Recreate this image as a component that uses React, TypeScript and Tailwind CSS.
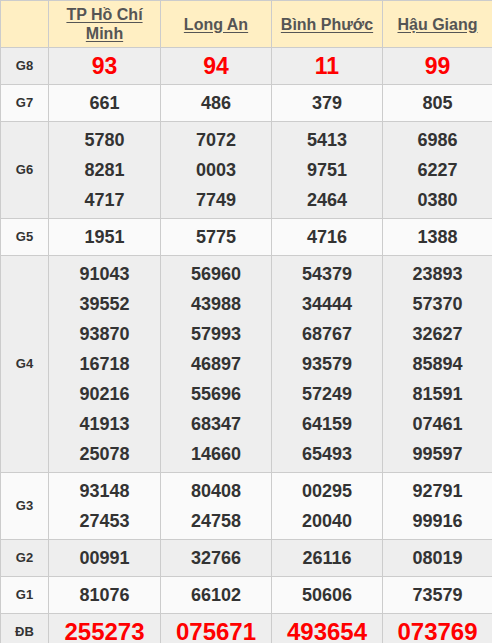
const provinces = ['TP Hồ Chí Minh', 'Long An', 'Bình Phước', 'Hậu Giang'];

type Row = { label: string; values: string[][]; kind?: 'g8' | 'db' };

const rows: Row[] = [
  { label: 'G8', kind: 'g8', values: [['93'], ['94'], ['11'], ['99']] },
  { label: 'G7', values: [['661'], ['486'], ['379'], ['805']] },
  {
    label: 'G6',
    values: [
      ['5780', '8281', '4717'],
      ['7072', '0003', '7749'],
      ['5413', '9751', '2464'],
      ['6986', '6227', '0380'],
    ],
  },
  { label: 'G5', values: [['1951'], ['5775'], ['4716'], ['1388']] },
  {
    label: 'G4',
    values: [
      ['91043', '39552', '93870', '16718', '90216', '41913', '25078'],
      ['56960', '43988', '57993', '46897', '55696', '68347', '14660'],
      ['54379', '34444', '68767', '93579', '57249', '64159', '65493'],
      ['23893', '57370', '32627', '85894', '81591', '07461', '99597'],
    ],
  },
  {
    label: 'G3',
    values: [
      ['93148', '27453'],
      ['80408', '24758'],
      ['00295', '20040'],
      ['92791', '99916'],
    ],
  },
  { label: 'G2', values: [['00991'], ['32766'], ['26116'], ['08019']] },
  { label: 'G1', values: [['81076'], ['66102'], ['50606'], ['73579']] },
  { label: 'ĐB', kind: 'db', values: [['255273'], ['075671'], ['493654'], ['073769']] },
];

export default function App() {
  return (
    <div className="w-[492px] h-[643px] overflow-hidden bg-white font-[family-name:'Liberation_Sans',Arial,sans-serif]">
      <table className="w-[492px] border-collapse table-fixed">
        <colgroup>
          <col className="w-[48px]" />
          <col className="w-[112px]" />
          <col className="w-[111px]" />
          <col className="w-[111px]" />
          <col className="w-[110px]" />
        </colgroup>
        <thead>
          <tr className="h-[47px] bg-[#ffefc3]">
            <th className="border border-[#cccccc]"></th>
            {provinces.map((p) => (
              <th
                key={p}
                className="border border-[#cccccc] px-1 text-[16px] leading-[19px] font-bold text-[#555555] text-center"
              >
                <a className="underline underline-offset-2">{p}</a>
              </th>
            ))}
          </tr>
        </thead>
        <tbody>
          {rows.map((row, i) => (
            <tr key={row.label} className={i % 2 === 0 ? 'bg-[#eeeeee]' : 'bg-[#fafafa]'}>
              <td className="border border-[#cccccc] text-center text-[13px] font-bold text-[#333333]">
                {row.label}
              </td>
              {row.values.map((nums, j) => (
                <td key={j} className="border border-[#cccccc] text-center py-[3px]">
                  {nums.map((n, k) => (
                    <div
                      key={k}
                      className={
                        row.kind === 'g8'
                          ? 'text-[23px] leading-[30px] font-bold text-[#ff0000]'
                          : row.kind === 'db'
                          ? 'text-[24px] leading-[30px] font-bold text-[#ff0000]'
                          : 'text-[18px] leading-[30px] font-bold text-[#333333]'
                      }
                    >
                      {n}
                    </div>
                  ))}
                </td>
              ))}
            </tr>
          ))}
        </tbody>
      </table>
    </div>
  );
}
